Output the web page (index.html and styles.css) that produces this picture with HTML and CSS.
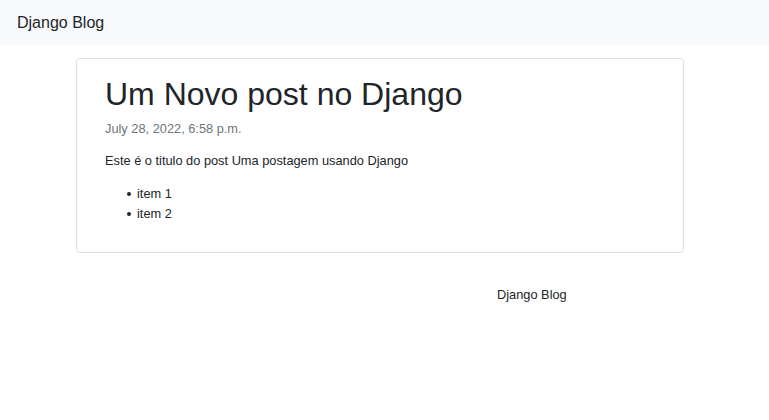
FILE: index.html
```html
<!DOCTYPE html>
<html lang="pt">
<head>
<meta charset="utf-8">
<title>Django Blog</title>
<link rel="stylesheet" href="styles.css">
</head>
<body>
<nav class="navbar"><span class="brand">Django Blog</span></nav>
<main class="container">
  <article class="card">
    <h1 class="title">Um Novo post no Django</h1>
    <p class="date">July 28, 2022, 6:58 p.m.</p>
    <p class="body-text">Este é o titulo do post Uma postagem usando Django</p>
    <ul class="items">
      <li>item 1</li>
      <li>item 2</li>
    </ul>
  </article>
</main>
<footer class="footer">Django Blog</footer>
</body>
</html>
```
FILE: styles.css
```css
html, body { margin: 0; padding: 0; }
body {
  font-family: "Liberation Sans", Arial, sans-serif;
  color: #212529;
  background: #fff;
}
.navbar {
  height: 45px;
  background: #f8f9fa;
  display: flex;
  align-items: center;
  padding-left: 17px;
  box-sizing: border-box;
}
.brand { font-size: 16px; color: #212529; }
.container {
  margin: 13px 0 0 76px;
  width: 608px;
}
.card {
  border: 1px solid #dfdfdf;
  border-radius: 4px;
  padding: 16px 28px 28px 28px;
  box-sizing: border-box;
}
.title {
  font-size: 32px;
  font-weight: 400;
  line-height: 38px;
  margin: 0 0 8px 0;
}
.date {
  font-size: 12.8px;
  color: #6c757d;
  margin: 0 0 16px 0;
  line-height: 16px;
}
.body-text {
  font-size: 12.8px;
  margin: 0 0 15px 0;
  line-height: 16px;
}
.items {
  font-size: 12.8px;
  margin: 0;
  padding-left: 32px;
  line-height: 20px;
  list-style: none;
}
.items li::before {
  content: "";
  display: inline-block;
  width: 4px;
  height: 4px;
  border-radius: 50%;
  background: #212529;
  margin-left: -10px;
  margin-right: 6px;
  vertical-align: 2px;
}
.footer {
  font-size: 12.8px;
  padding: 34px 0 0 497px;
  line-height: 16px;
}
```
